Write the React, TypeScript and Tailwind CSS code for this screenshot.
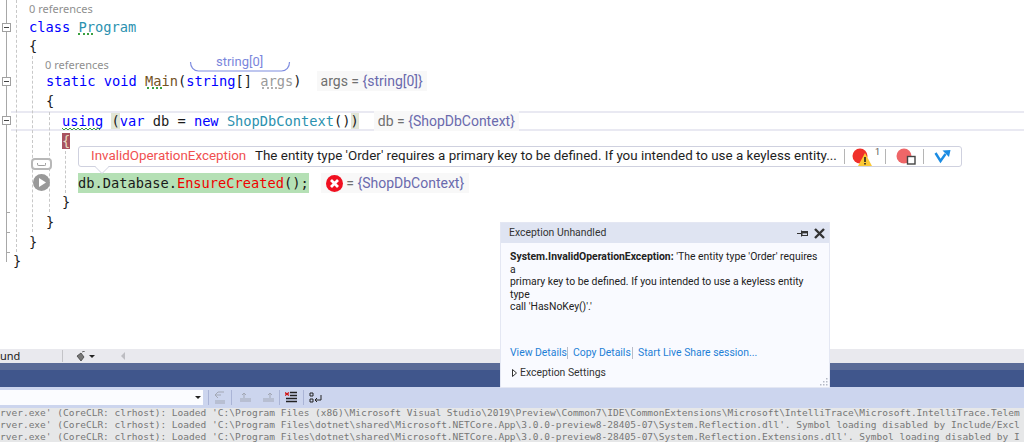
import type { ReactNode } from 'react';

const Kw = ({ children }: { children: ReactNode }) => <span className="text-[#0000ff]">{children}</span>;
const Ty = ({ children }: { children: ReactNode }) => <span className="text-[#2b91af]">{children}</span>;

const Dots = ({ className }: { className: string }) => (
  <span className={`absolute bottom-[0px] h-[2px] border-b-2 border-dotted ${className}`} />
);

const Lens = ({ className }: { className: string }) => (
  <div className={`flex items-center font-['Noto_Sans',sans-serif] text-[11px] text-[#8f8f8f] ${className}`}>
    0 references
  </div>
);

const CodeLine = ({
  indent,
  height,
  after,
  children,
}: {
  indent: string;
  height: string;
  after?: ReactNode;
  children: ReactNode;
}) => (
  <div className={`flex items-center ${indent} ${height}`}>
    <span className="whitespace-pre">{children}</span>
    {after}
  </div>
);

const Hint = ({ children }: { children: ReactNode }) => (
  <span className="ml-[15px] flex h-[20px] items-center whitespace-pre bg-[#f8f8f8] px-[4px] font-['Roboto',sans-serif] text-[14px] text-[#6f6f6f]">
    {children}
  </span>
);

const Value = ({ children }: { children: ReactNode }) => <span className="text-[#6a6aad]">{children}</span>;

const FoldBox = ({ top }: { top: string }) => (
  <div className={`absolute left-[2px] flex h-[9px] w-[9px] items-center justify-center border border-[#a0a0a0] bg-white ${top}`}>
    <span className="h-[1px] w-[5px] bg-[#444]" />
  </div>
);

const Guide = ({ className }: { className: string }) => (
  <div className={`absolute w-0 border-l border-dashed border-[#c8c8c8] ${className}`} />
);

const ErrorIcon = () => (
  <svg width="17" height="17" viewBox="0 0 17 17">
    <circle cx="8.5" cy="8.5" r="8.5" fill="#f01020" />
    <path d="M5 5l7 7M12 5l-7 7" stroke="#fff" strokeWidth="2.8" />
  </svg>
);

const BubbleIcons = () => (
  <div className="flex h-full items-center">
    <span className="ml-[10px] h-[15px] w-px bg-[#b5b5b5]" />
    <svg className="ml-[7px]" width="20" height="18" viewBox="0 0 20 18">
      <circle cx="8" cy="8" r="7.5" fill="#f0302a" />
      <path d="M13 5l7 13H6z" fill="#fcc934" />
      <path d="M13 9v5M13 15v1.6" stroke="#222" strokeWidth="1.6" />
    </svg>
    <span className="ml-[3px] mb-[8px] w-[10px] font-['Roboto',sans-serif] text-[9px] leading-none text-[#555]">1</span>
    <span className="h-[15px] w-px bg-[#b5b5b5]" />
    <svg className="ml-[10px]" width="20" height="18" viewBox="0 0 20 18">
      <circle cx="8" cy="8" r="7.5" fill="#ee6668" />
      <rect x="11.5" y="8.5" width="7.5" height="7.5" fill="#fff" stroke="#444" strokeWidth="1.4" />
    </svg>
    <span className="ml-[7px] h-[15px] w-px bg-[#b5b5b5]" />
    <svg className="ml-[10px]" width="17" height="15" viewBox="0 0 17 15">
      <path d="M1.5 4L6.5 12L11.5 5" fill="none" stroke="#1c8ce3" strokeWidth="2.4" />
      <path d="M8.5 1.5L16.5 1L15 8z" fill="#1c8ce3" />
    </svg>
  </div>
);

const ExceptionBubble = () => (
  <div className="absolute left-[78px] top-[146px] flex h-[21px] w-[884px] items-center whitespace-pre rounded-[3px] border border-[#cfd1df] bg-white pl-[12px] font-['Roboto',sans-serif] text-[13.4px] text-[#1e1e1e]">
    <span className="w-[164px] text-[#f05050]">InvalidOperationException</span>
    <span className="w-[579px]">
      The entity type 'Order' requires a primary key to be defined. If you intended to use a keyless entity...
    </span>
    <BubbleIcons />
    <svg className="absolute left-[16px] top-[19px]" width="14" height="8" viewBox="0 0 14 8">
      <path d="M0 0.5L7 7.5L14 0.5" fill="#fff" stroke="#cfd1df" />
      <rect x="1" y="0" width="12" height="1" fill="#fff" />
    </svg>
  </div>
);

const ExceptionPopup = () => (
  <div className="absolute left-[501px] top-[223px] flex h-[164px] w-[328px] flex-col bg-[#f9faff] font-['Roboto',sans-serif] text-[10.4px] shadow-[0_0_0_1px_#e4e7f3]">
    <div className="flex h-[20px] items-center justify-between bg-[#dfe4f2] pl-[8px] pr-[4px] text-[#333]">
      <span>Exception Unhandled</span>
      <div className="flex items-center gap-[6px]">
        <svg width="11" height="9" viewBox="0 0 11 9">
          <path d="M0 4.5h4M4.5 1.5v6" stroke="#333" strokeWidth="1" />
          <rect x="5" y="2.5" width="5.5" height="4" fill="none" stroke="#333" />
          <rect x="5" y="3" width="5.5" height="1.4" fill="#333" />
        </svg>
        <svg width="11" height="11" viewBox="0 0 11 11">
          <path d="M1 1l9 9M10 1l-9 9" stroke="#333" strokeWidth="2.4" />
        </svg>
      </div>
    </div>
    <p className="mx-[9px] mt-[8px] leading-[12.5px] text-[#222]">
      <b className="font-bold">System.InvalidOperationException:</b> 'The entity type 'Order' requires a
      <br />
      primary key to be defined. If you intended to use a keyless entity type
      <br />
      call 'HasNoKey()'.'
    </p>
    <div className="mt-auto ml-[9px] flex items-center text-[#1e7fd6]">
      <span className="w-[52px] whitespace-pre">View Details</span>
      <span className="mx-[5px] h-[12px] w-px bg-[#b9bcc9]" />
      <span className="w-[54px] whitespace-pre">Copy Details</span>
      <span className="mx-[5px] h-[12px] w-px bg-[#b9bcc9]" />
      <span className="whitespace-pre">Start Live Share session...</span>
    </div>
    <div className="mt-[6px] mb-[8px] ml-[11px] flex items-center gap-[3px] leading-[12px] text-[#333]">
      <svg width="5" height="8" viewBox="0 0 5 8">
        <path d="M0.5 0.5L4.5 4L0.5 7.5z" fill="#fff" stroke="#333" />
      </svg>
      <span>Exception Settings</span>
    </div>
    <svg className="absolute bottom-[1px] right-[1px]" width="9" height="9" viewBox="0 0 9 9" fill="#b5b9c6">
      <rect x="7" y="1" width="1.5" height="1.5" />
      <rect x="7" y="4" width="1.5" height="1.5" />
      <rect x="7" y="7" width="1.5" height="1.5" />
      <rect x="4" y="4" width="1.5" height="1.5" />
      <rect x="4" y="7" width="1.5" height="1.5" />
      <rect x="1" y="7" width="1.5" height="1.5" />
    </svg>
  </div>
);

const Editor = () => (
  <div className="relative h-[349px] overflow-hidden bg-white font-['DejaVu_Sans_Mono',monospace] text-[13.7px] text-[#1a1a1a]">
    {/* current line frame */}
    <div className="absolute left-[11px] right-0 top-[111px] h-[20px] border-y-2 border-[#e9e9f2]" />

    {/* margin + guides */}
    <div className="absolute left-[6px] top-0 h-[262px] w-px bg-[#a8a8a8]" />
    <div className="absolute left-[6px] top-[212px] h-px w-[4px] bg-[#a8a8a8]" />
    <div className="absolute left-[6px] top-[232px] h-px w-[4px] bg-[#a8a8a8]" />
    <div className="absolute left-[6px] top-[252px] h-px w-[4px] bg-[#a8a8a8]" />
    <FoldBox top="top-[23px]" />
    <FoldBox top="top-[77px]" />
    <FoldBox top="top-[116px]" />
    <Guide className="left-[16px] top-0 h-[252px]" />
    <Guide className="left-[32px] top-[56px] h-[176px]" />
    <Guide className="left-[49px] top-[112px] h-[100px]" />
    <Guide className="left-[65px] top-[151px] h-[42px]" />

    <div className="relative">
      <Lens className="h-[18px] pl-[29px]" />
      <CodeLine indent="pl-[29px]" height="h-[19px]">
        <Kw>class</Kw> <span className="relative text-[#2b91af]">Program<Dots className="left-0 w-[15px] border-[#3aa040]" /></span>
      </CodeLine>
      <CodeLine indent="pl-[29px]" height="h-[19px]">{'{'}</CodeLine>
      <Lens className="h-[15px] pt-[3px] pl-[45px]" />
      <CodeLine
        indent="pl-[46px]"
        height="h-[20px]"
        after={
          <Hint>
            args = <Value>{'{string[0]}'}</Value>
          </Hint>
        }
      >
        <Kw>static</Kw> <Kw>void</Kw>{' '}
        <span className="relative text-[#74531f]">Main<Dots className="left-[2px] w-[15px] border-[#3aa040]" /></span>
        (<Kw>string</Kw>[]{' '}
        <span className="relative text-[#9a9a9a]">args<Dots className="left-[2px] w-[15px] border-[#b0b0b0]" /></span>)
      </CodeLine>
      <CodeLine indent="pl-[46px]" height="h-[20px]">{'{'}</CodeLine>
      <CodeLine
        indent="pl-[62px]"
        height="h-[20px]"
        after={
          <Hint>
            db = <Value>{'{ShopDbContext}'}</Value>
          </Hint>
        }
      >
        <span className="relative text-[#0000ff]">
          using
          <svg className="absolute -bottom-[2px] left-0" width="41" height="4" viewBox="0 0 41 4">
            <path
              d="M0 1l2 2 2-2 2 2 2-2 2 2 2-2 2 2 2-2 2 2 2-2 2 2 2-2 2 2 2-2 2 2 2-2 2 2 2-2 2 2"
              fill="none"
              stroke="#3aa040"
            />
          </svg>
        </span>{' '}
        <span className="bg-[#e2e6d6]">(</span>
        <Kw>var</Kw> db = <Kw>new</Kw> <Ty>ShopDbContext</Ty>()
        <span className="bg-[#e2e6d6]">)</span>
      </CodeLine>
      <CodeLine indent="pl-[62px]" height="h-[20px]">
        <span className="bg-[#a9525f] text-[#e8dcc0]">{'{'}</span>
      </CodeLine>
      <div className="h-[22px]" />
      <CodeLine
        indent="pl-[78px]"
        height="h-[20px]"
        after={
          <span className="ml-[12px] flex h-[20px] items-center bg-[#f8f8f8] pl-[5px] pr-[5px] font-['Roboto',sans-serif] text-[14px] text-[#6f6f6f]">
            <ErrorIcon />
            <span className="whitespace-pre">
              {' '}
              = <Value>{'{ShopDbContext}'}</Value>
            </span>
          </span>
        }
      >
        <span className="bg-[#b5e0b5] py-[2px]">
          db.Database.<span className="text-[#f00000]">EnsureCreated</span>();
        </span>
      </CodeLine>
      <CodeLine indent="pl-[62px]" height="h-[19px]">{'}'}</CodeLine>
      <CodeLine indent="pl-[46px]" height="h-[20px]">{'}'}</CodeLine>
      <CodeLine indent="pl-[29px]" height="h-[20px]">{'}'}</CodeLine>
      <CodeLine indent="pl-[13px]" height="h-[19px]">{'}'}</CodeLine>
    </div>

    <ExceptionBubble />

    {/* run to click + peek glyphs */}
    <div className="absolute left-[31px] top-[158px] flex h-[12px] w-[21px] items-center justify-center rounded-[4px] border-2 border-[#b8b8b8] bg-white">
      <span className="mt-[1px] h-[3px] w-[9px] rounded-b-[2px] border-x border-b border-[#a0a0a0]" />
    </div>
    <svg className="absolute left-[33px] top-[174px]" width="17" height="17" viewBox="0 0 17 17">
      <circle cx="8.5" cy="8.5" r="8.5" fill="#999" />
      <path d="M6 4l7 4.5L6 13z" fill="#fff" />
    </svg>

    {/* parameter hint */}
    <svg className="absolute left-[189px] top-[61px]" width="102" height="11" viewBox="0 0 102 11" fill="none" stroke="#7f8de0" strokeWidth="1.2">
      <path d="M1.5 1c0 5 3 9 8 9h83c5 0 8-4 8-9" />
    </svg>
    <div className="absolute left-[216px] top-[53px] font-['Roboto',sans-serif] text-[13px] leading-[17px] text-[#7a86dc]">
      string[0]
    </div>
  </div>
);

const ToolbarSep = () => <span className="h-[15px] w-px bg-[#aab4d6]" />;

const OutputToolbar = () => (
  <div className="flex h-[21px] items-center bg-[#ccd5ee]">
    <div className="flex h-[15px] w-[203px] items-center justify-end bg-[#fbfcff] pr-[2px]">
      <span className="border-x-[3px] border-t-[3px] border-x-transparent border-t-[#222]" />
    </div>
    <div className="ml-[5px] flex items-center gap-[5px]">
      <ToolbarSep />
      <svg width="12" height="13" viewBox="0 0 12 13" fill="none" stroke="#a3a8b5">
        <path d="M4 1h6M4 1L1 4l3 3M1 4h6M1 10h10M1 12h10" />
      </svg>
      <ToolbarSep />
      <svg className="ml-[3px]" width="11" height="11" viewBox="0 0 11 11" fill="none" stroke="#a3a8b5">
        <path d="M4 1v5M2 3l2-2 2 2M0 7h11M0 9h11" />
      </svg>
      <svg className="ml-[7px]" width="11" height="11" viewBox="0 0 11 11" fill="none" stroke="#a3a8b5">
        <path d="M7 1v5M5 3l2-2 2 2M0 7h11M0 9h11" />
      </svg>
      <ToolbarSep />
      <svg width="13" height="13" viewBox="0 0 13 13">
        <path d="M0 1.5l4 3M4 1.5l-4 3" stroke="#d01818" strokeWidth="1.4" />
        <path d="M5 1.5h7M5 4.5h7M1 7.5h11M1 10.5h11" stroke="#222" strokeWidth="1.4" />
      </svg>
      <ToolbarSep />
      <svg width="13" height="12" viewBox="0 0 13 12" fill="none" stroke="#222">
        <path d="M1 1h3v3H1zM1 7h3v3H1zM12 3v5H6M8 6L6 8l2 2" />
      </svg>
    </div>
  </div>
);

const OUTPUT_LINES = [
  "rver.exe' (CoreCLR: clrhost): Loaded 'C:\\Program Files (x86)\\Microsoft Visual Studio\\2019\\Preview\\Common7\\IDE\\CommonExtensions\\Microsoft\\IntelliTrace\\Microsoft.IntelliTrace.Telem",
  "rver.exe' (CoreCLR: clrhost): Loaded 'C:\\Program Files\\dotnet\\shared\\Microsoft.NETCore.App\\3.0.0-preview8-28405-07\\System.Reflection.dll'. Symbol loading disabled by Include/Excl",
  "rver.exe' (CoreCLR: clrhost): Loaded 'C:\\Program Files\\dotnet\\shared\\Microsoft.NETCore.App\\3.0.0-preview8-28405-07\\System.Reflection.Extensions.dll'. Symbol loading disabled by I",
];

export default function App() {
  return (
    <div className="relative h-[442px] w-[1024px] overflow-hidden bg-white">
      <Editor />

      <div className="flex h-[14px] items-center bg-[#e9e9ee] font-['Noto_Sans',sans-serif] text-[11px] text-[#222]">
        <span className="w-[62px]">und</span>
        <span className="h-[12px] w-px bg-[#c4c4c8]" />
        <svg className="ml-[13px]" width="10" height="11" viewBox="0 0 10 11">
          <path d="M6 1L9 0M1 5l4-3 3 4-3 4z" fill="#777" stroke="#333" strokeWidth="0.7" />
        </svg>
        <span className="ml-[3px] border-x-[3px] border-t-[3px] border-x-transparent border-t-[#222]" />
        <span className="ml-[26px] border-y-[4px] border-r-[4px] border-y-transparent border-r-[#bdbdc2]" />
      </div>

      <div className="h-[24px] bg-[#40568c]">
        <div className="h-[7px] bg-[#5a6b97]" />
      </div>

      <OutputToolbar />

      <div className="h-[34px] overflow-hidden bg-[#e6e7e8] font-['DejaVu_Sans_Mono',monospace] text-[9.52px] leading-[12.2px] text-[#777]">
        {OUTPUT_LINES.map((line) => (
          <div key={line} className="-translate-y-px whitespace-pre">
            {line}
          </div>
        ))}
      </div>

      <ExceptionPopup />
    </div>
  );
}
